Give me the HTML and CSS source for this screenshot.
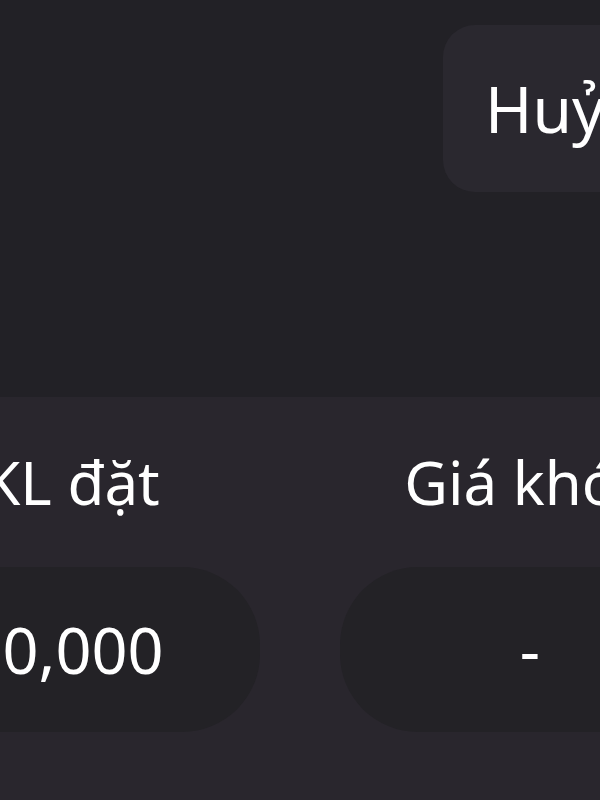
FILE: index.html
```html
<!DOCTYPE html>
<html lang="vi">
<head>
<meta charset="utf-8">
<link rel="stylesheet" href="styles.css">
</head>
<body>
<div class="top">
  <div class="btn">Huỷ</div>
</div>
<div class="bottom">
  <div class="row">
    <div class="field">
      <div class="label label-qty">KL đặt</div>
      <div class="input input-qty">10,000</div>
    </div>
    <div class="field">
      <div class="label">Giá khớp</div>
      <div class="input">-</div>
    </div>
  </div>
</div>
</body>
</html>
```

FILE: styles.css
```css
html, body {
  margin: 0;
  padding: 0;
  width: 600px;
  height: 800px;
  overflow: hidden;
  background: #222126;
  font-family: "Noto Sans", "Open Sans", sans-serif;
  color: #ffffff;
}
.top {
  height: 397px;
  box-sizing: border-box;
  padding-top: 25px;
  display: flex;
  justify-content: flex-end;
}
.btn {
  width: 200px;
  height: 167px;
  margin-right: -43px;
  box-sizing: border-box;
  padding-left: 42px;
  border-radius: 32px;
  background: #2a282f;
  display: flex;
  align-items: center;
  font-size: 64px;
}
.bottom {
  background: #29262d;
  height: 403px;
  padding-top: 45px;
  box-sizing: border-box;
}
.row {
  display: flex;
  gap: 80px;
  margin-left: -120px;
}
.field {
  width: 380px;
  flex: none;
  display: flex;
  flex-direction: column;
  align-items: center;
}
.label {
  font-size: 60px;
  line-height: 80px;
  height: 80px;
  white-space: nowrap;
}
.label-qty {
  padding-left: 3px;
}
.input {
  margin-top: 45px;
  width: 380px;
  height: 165px;
  box-sizing: border-box;
  border-radius: 78px;
  background: #232226;
  display: flex;
  align-items: center;
  justify-content: center;
  font-size: 63px;
}
.input-qty {
  padding-right: 10px;
}
```
